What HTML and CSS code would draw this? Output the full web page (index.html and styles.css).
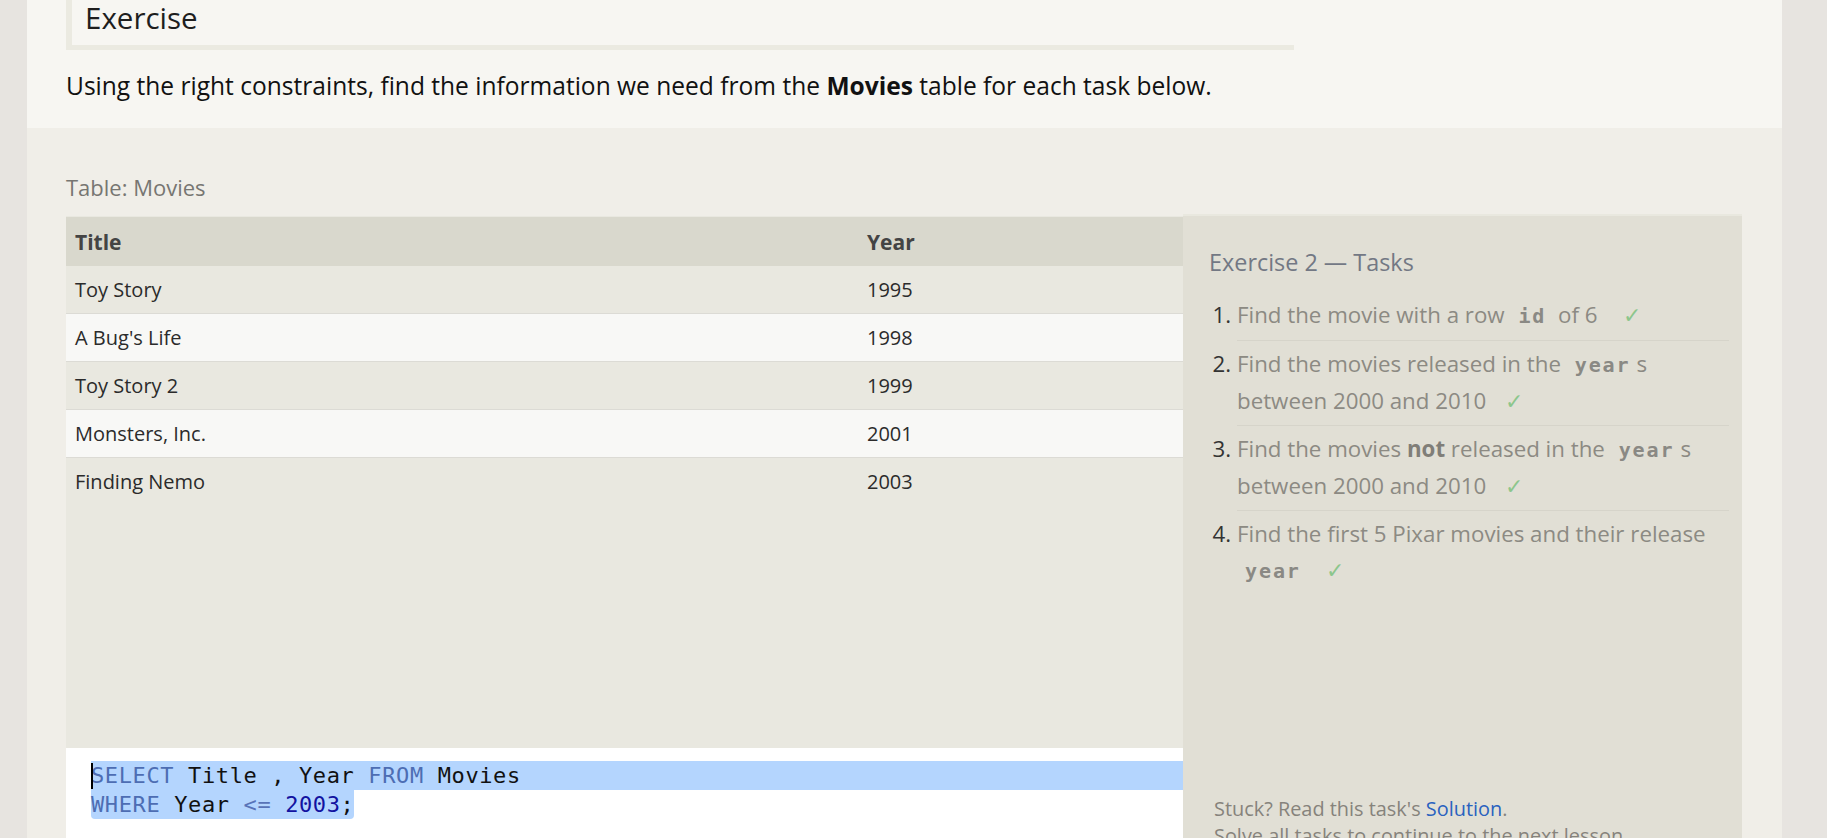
FILE: index.html
```html
<!DOCTYPE html>
<html>
<head>
<meta charset="utf-8">
<link rel="stylesheet" href="styles.css">
</head>
<body>
<div class="card">
  <section class="intro">
    <div class="ex-box"><h1 class="ex-title">Exercise</h1></div>
    <p class="lead">Using the right constraints, find the information we need from the <strong>Movies</strong> table for each task below.</p>
  </section>
  <section class="exercise">
    <div class="table-label">Table: Movies</div>
    <div class="workspace">
      <div class="left-col">
        <div class="table-area">
          <div class="trow thead"><div class="cell">Title</div><div class="cell">Year</div></div>
          <div class="trow odd"><div class="cell">Toy Story</div><div class="cell">1995</div></div>
          <div class="trow even"><div class="cell">A Bug's Life</div><div class="cell">1998</div></div>
          <div class="trow odd"><div class="cell">Toy Story 2</div><div class="cell">1999</div></div>
          <div class="trow even"><div class="cell">Monsters, Inc.</div><div class="cell">2001</div></div>
          <div class="trow odd last"><div class="cell">Finding Nemo</div><div class="cell">2003</div></div>
        </div>
        <div class="editor">
          <div class="code-line sel-full"><span class="cursor"></span><span class="kw">SELECT</span> Title , Year <span class="kw">FROM</span> Movies</div>
          <div class="code-line"><span class="sel-part"><span class="kw">WHERE</span> Year <span class="op">&lt;=</span> <span class="num">2003</span>;</span></div>
        </div>
      </div>
      <aside class="tasks">
        <h2 class="tasks-title">Exercise 2 — Tasks</h2>
        <ol class="task-list">
          <li><span class="task">Find the movie with a row <code>id</code> of 6 <span class="check first">✓</span></span></li>
          <li><span class="task">Find the movies released in the <code>year</code>s between 2000 and 2010 <span class="check">✓</span></span></li>
          <li><span class="task">Find the movies <strong>not</strong> released in the <code>year</code>s between 2000 and 2010 <span class="check">✓</span></span></li>
          <li class="last"><span class="task">Find the first 5 Pixar movies and their release <code>year</code> <span class="check">✓</span></span></li>
        </ol>
        <div class="stuck">
          <p>Stuck? Read this task's <a href="#">Solution</a>.</p>
          <p>Solve all tasks to continue to the next lesson.</p>
        </div>
      </aside>
    </div>
  </section>
</div>
</body>
</html>
```
FILE: styles.css
```css
html, body {
  margin: 0;
  padding: 0;
  height: 838px;
  overflow: hidden;
}
body {
  background: #e7e4e0;
  font-family: "Open Sans", "Noto Sans", sans-serif;
  color: #222;
}
.card {
  margin-left: 27px;
  width: 1755px;
  background: #f0eee8;
}
.intro {
  background: #f7f6f2;
  padding: 0 40px 0 39px;
  height: 128px;
  box-sizing: border-box;
  overflow: hidden;
}
.ex-box {
  width: 1222px;
  margin-top: -30px;
  padding: 30px 0 0 0;
  border-left: 6px solid #ebeae1;
  border-bottom: 5px solid #ebeae1;
  height: 45px;
  box-sizing: content-box;
}
.ex-title {
  margin: 0;
  padding-left: 13px;
  font-family: "Open Sans", sans-serif;
  font-weight: 400;
  font-size: 29.5px;
  line-height: 40px;
  margin-top: -2px;
  color: #1e1e1e;
}
.lead {
  margin: 20px 0 0 0;
  font-size: 24.55px;
  line-height: 32px;
  color: #111;
}
.lead strong { font-weight: 700; }
.exercise {
  padding: 0 40px 0 39px;
}
.table-label {
  padding-top: 44px;
  font-size: 22px;
  line-height: 30px;
  color: #777672;
  margin-bottom: 14px;
}
.workspace {
  display: flex;
}
.left-col {
  width: 1117px;
  display: flex;
  flex-direction: column;
}
.table-area {
  height: 532px;
  background: #e9e8e0;
  box-sizing: border-box;
  padding-top: 1px;
}
.trow {
  display: grid;
  grid-template-columns: 792px 1fr;
  align-items: center;
  height: 47px;
  border-bottom: 1px solid #dcdbd5;
  font-size: 20px;
  color: #2b2b2b;
}
.trow .cell { padding-left: 9px; }
.thead {
  height: 49px;
  background: #d9d8cd;
  font-weight: 700;
  font-size: 21px;
  color: #444;
  border-bottom: none;
}
.odd { background: #e9e8e0; }
.even { background: #f8f8f6; }
.trow.last { border-bottom: none; }
.editor {
  background: #fff;
  height: 120px;
  padding-top: 13px;
  box-sizing: border-box;
  font-family: "DejaVu Sans Mono", monospace;
  font-size: 22px;
  letter-spacing: 0.62px;
  color: #111;
}
.code-line {
  height: 29px;
  line-height: 29px;
  padding-left: 25px;
  white-space: pre;
}
.sel-full {
  margin-left: 25px;
  padding-left: 0;
  background: #b4d5fe;
  position: relative;
}
.sel-part {
  display: inline-block;
  background: #b4d5fe;
  border-radius: 0 0 4px 4px;
}
.cursor {
  position: absolute;
  left: 0;
  top: 2px;
  width: 2px;
  height: 26px;
  background: #000;
}
.kw { color: #4d6db3; }
.op { color: #5873b8; }
.num { color: #1212a0; }
.tasks {
  width: 559px;
  background: #e1dfd5;
  border-top: 2px solid #e9e8df;
  margin-top: -2px;
  padding: 0 13px 0 26px;
  box-sizing: border-box;
}
.tasks-title {
  margin: 31px 0 0 0;
  font-weight: 400;
  font-size: 23.4px;
  line-height: 30px;
  color: #737884;
}
.task-list {
  margin: 15px 0 0 0;
  padding-left: 28px;
  font-size: 22.3px;
  line-height: 36px;
  color: #333;
}
.task-list li {
  padding: 5px 0 6px 0;
  border-bottom: 1px solid #d6d4ca;
}
.task-list li.last { border-bottom: none; }
.task { color: #8c8a83; }
.task strong { color: #807e78; }
.task code {
  font-family: "DejaVu Sans Mono", monospace;
  font-weight: 700;
  font-size: 20px;
  letter-spacing: 1.9px;
  color: #8a8984;
  padding: 0 6px 0 8px;
}
.check {
  color: #8cc68c;
  margin-left: 13px;
}
.check.first { margin-left: 20px; }
.stuck {
  margin-top: 200px;
  padding-left: 5px;
  font-size: 19.9px;
  line-height: 27px;
  color: #86837c;
}
.stuck p { margin: 0; }
.stuck a { color: #2a62bf; text-decoration: none; }
```
